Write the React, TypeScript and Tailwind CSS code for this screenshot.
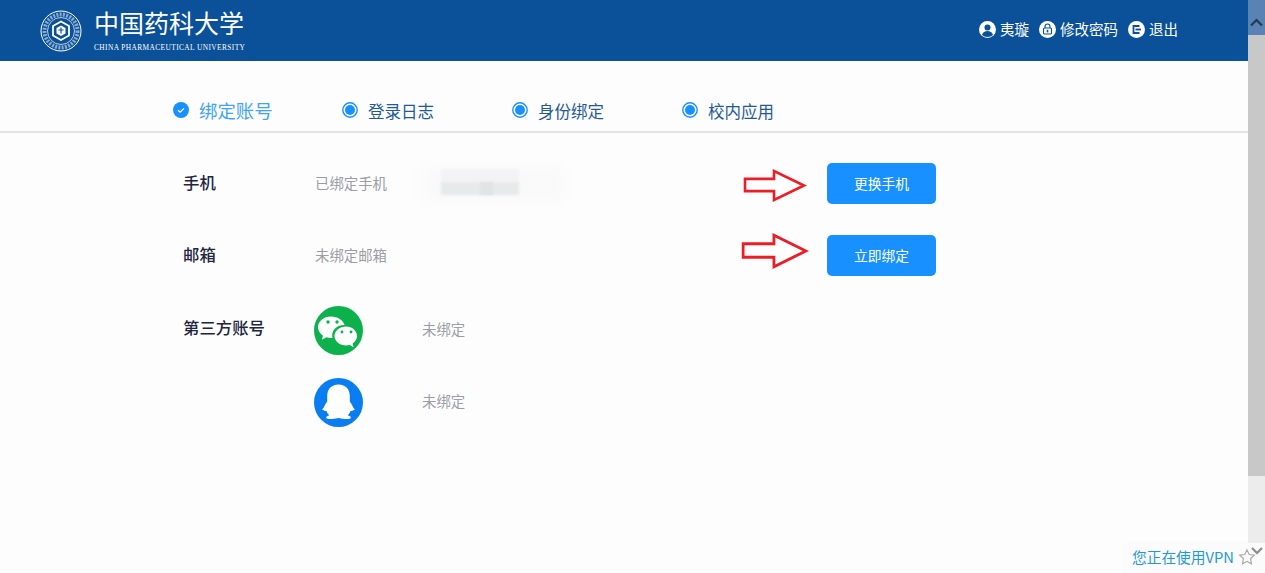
import React from 'react';

const cjk = { fontFamily: '"Noto Sans CJK SC", "Noto Sans", sans-serif' };

const Tab = ({ label, active }: { label: string; active?: boolean }) => (
  <div className={active ? 'flex w-[169px] items-center gap-[10px]' : 'flex w-[170px] items-center gap-[10px]'}>
    {active ? (
      <svg width="16" height="16" viewBox="0 0 16 16" className="mb-[2px] shrink-0">
        <circle cx="8" cy="8" r="8" fill="#1890ff" />
        <path d="M5 8.200 7.200 10.200 11 6.400" fill="none" stroke="#fff" strokeWidth="1.300" />
      </svg>
    ) : (
      <svg width="16" height="16" viewBox="0 0 16 16" className="mb-[2px] shrink-0">
        <circle cx="8" cy="8" r="7.200" fill="#fff" stroke="#1890ff" strokeWidth="1.400" />
        <circle cx="8" cy="8" r="5" fill="#1890ff" />
      </svg>
    )}
    <span className={active ? 'text-[18.400px] text-[#3fa4fb]' : 'text-[16.500px] text-[#1f5a96]'}>{label}</span>
  </div>
);

const BindRow = ({ label, status, action, children }: { label: string; status: string; action: string; children?: React.ReactNode }) => (
  <div className="flex h-[41px] items-center">
    <div className="w-[132px] pb-[3px] text-[16.400px] font-medium text-[#22253f]">{label}</div>
    <div className="relative w-[512px] pb-[2px] text-[14.400px] text-[#9a9ea3]">
      {status}
      {children}
    </div>
    <button className="h-[41px] w-[109px] rounded-[5px] bg-[#1890ff] text-[13.800px] text-white">{action}</button>
  </div>
);

const Seal = () => (
  <svg width="42" height="42" viewBox="0 0 42 42" className="shrink-0">
    <circle cx="21" cy="21" r="20" fill="none" stroke="#fff" strokeWidth="1" />
    <circle cx="21" cy="21" r="16.500" fill="none" stroke="#dfe8f3" strokeWidth="4" strokeDasharray="2 1.300" opacity="0.6" />
    <circle cx="21" cy="21" r="13.500" fill="none" stroke="#fff" strokeWidth="0.700" />
    <path d="M21 11.500 29 16v9.500L21 30l-8-4.500V16z" fill="none" stroke="#fff" strokeWidth="1.800" />
    <path d="M21 15.500 25.500 18v5.500L21 26l-4.500-2.500V18z" fill="#fff" />
    <path d="M21 17.500v6M18.500 20h5" stroke="#0b5199" strokeWidth="1.200" />
  </svg>
);

const WeChat = () => (
  <svg width="49" height="49" viewBox="0 0 49 49">
    <circle cx="24.500" cy="24.500" r="24.500" fill="#0db14b" />
    <path d="M17 10.500C9.800 10.500 4 15.300 4 21.200c0 3.500 2 6.500 5 8.500l-1.200 4.100 4.700-2.500c1.400.4 3 .6 4.500.6h1.500c-.2-.9-.3-1.700-.3-2.600 0-5.700 5.200-10.300 11.600-10.300h.8C28.900 14 23.500 10.500 17 10.500z" fill="#fff" />
    <path d="M32 20.500c-6 0-11.500 4.200-11.500 9.500s5.500 9.500 11.500 9.500c1.300 0 2.500-.2 3.700-.5l3.900 2.300-1-3.700c2.700-1.800 4.400-4.500 4.400-7.600 0-5.300-4.900-9.500-11-9.500z" fill="#fff" />
    <circle cx="14" cy="16" r="1.700" fill="#0db14b" />
    <circle cx="23" cy="16" r="1.700" fill="#0db14b" />
    <circle cx="28" cy="26" r="1.400" fill="#0db14b" />
    <circle cx="37" cy="26" r="1.400" fill="#0db14b" />
  </svg>
);

const QQ = () => (
  <svg width="49" height="49" viewBox="0 0 49 49">
    <circle cx="24.500" cy="24.500" r="24.500" fill="#0a7df2" />
    <path d="M24.500 6.500c-7.300 0-11.300 5-11.300 11.500v5.500c-1.400 1.700-2.500 3.500-3.200 5.500-.4 1.100-1.300 1.600-1.600 2.300-.2.500.4.900 1.400 1 .6.900 1.600 1 2.600.4.600 1.900 1.500 3.300 2.900 4.500-1.700.5-3.300 1.200-3.100 2.600.2 1 2 1.300 4.400 1.300 2.800 0 5.200-.4 7.900-1 2.700.6 5.100 1 7.900 1 2.400 0 4.200-.3 4.400-1.300.2-1.400-1.400-2.100-3.100-2.600 1.400-1.200 2.300-2.600 2.900-4.500 1 .6 2 .5 2.600-.4 1-.1 1.600-.5 1.400-1-.3-.7-1.200-1.200-1.600-2.300-.7-2-1.800-3.800-3.200-5.500V18c0-6.500-4-11.500-11.300-11.500z" fill="#fff" />
  </svg>
);

const ThirdParty = ({ label, icon }: { label?: string; icon: React.ReactNode }) => (
  <div className="flex h-[49px] items-center">
    <div className="w-[131px] pb-[6px] text-[16.400px] font-medium text-[#22253f]">{label}</div>
    <div className="w-[108px] shrink-0">{icon}</div>
    <div className="pb-[4px] text-[14.400px] text-[#9a9ea3]">未绑定</div>
  </div>
);

const RedArrow = ({ className, w, h }: { className: string; w: number; h: number }) => (
  <svg width={w} height={h} viewBox="0 0 64 32" preserveAspectRatio="none" className={className}>
    <path d="M2 9.500h29V2l30 14-30 14v-8.500H2z" fill="#fff" stroke="#ee1c25" strokeWidth="2.600" />
  </svg>
);

const HeaderLink = ({ icon, label }: { icon: React.ReactNode; label: string }) => (
  <div className="flex items-center gap-[4px]">
    {icon}
    <span className="text-[14.500px] text-white">{label}</span>
  </div>
);

export default function App() {
  return (
    <div className="relative flex h-[573px] w-[1265px] overflow-hidden bg-[#fdfdfe]" style={cjk}>
      <div className="flex-1">
        <header className="flex h-[61px] items-center justify-between bg-[#0b5199] pl-[40px] pr-[70px]">
          <div className="flex items-center gap-[12px]">
            <Seal />
            <div className="flex flex-col pb-[4px] text-white">
              <span className="text-[25px] leading-[32px]">中国药科大学</span>
              <span className="mt-[5px] whitespace-nowrap text-[7.400px] leading-[9px] tracking-[0.4px]" style={{ fontFamily: '"Liberation Serif", serif' }}>
                CHINA PHARMACEUTICAL UNIVERSITY
              </span>
            </div>
          </div>
          <div className="flex items-center gap-[10px] pb-[3px]">
            <HeaderLink
              label="夷璇"
              icon={
                <svg width="17" height="17" viewBox="0 0 17 17">
                  <circle cx="8.500" cy="8.500" r="8.500" fill="#fff" />
                  <circle cx="8.500" cy="6.500" r="3" fill="#0b5199" />
                  <path d="M3 14c.8-3 3-4 5.500-4s4.700 1 5.500 4c-1.500 1.300-3.400 2-5.500 2S4.500 15.300 3 14z" fill="#0b5199" />
                </svg>
              }
            />
            <HeaderLink
              label="修改密码"
              icon={
                <svg width="17" height="17" viewBox="0 0 17 17">
                  <circle cx="8.500" cy="8.500" r="8.500" fill="#fff" />
                  <rect x="4.500" y="7" width="8" height="6" rx="1" fill="none" stroke="#0b5199" strokeWidth="1.100" />
                  <path d="M6 7V5.500a2.500 2.500 0 0 1 5 0V7" fill="none" stroke="#0b5199" strokeWidth="1.100" />
                  <rect x="7.700" y="8.800" width="1.600" height="2.600" fill="#0b5199" />
                </svg>
              }
            />
            <HeaderLink
              label="退出"
              icon={
                <svg width="17" height="17" viewBox="0 0 17 17">
                  <circle cx="8.500" cy="8.500" r="8.500" fill="#fff" />
                  <path d="M11.500 5H5.500v7h6" fill="none" stroke="#0b5199" strokeWidth="1.800" />
                  <path d="M7.500 8.500H13" stroke="#0b5199" strokeWidth="1.800" />
                </svg>
              }
            />
          </div>
        </header>

        <nav className="flex h-[72px] items-center border-b-2 border-[#e3e3e5] pl-[173px] pt-[30px]">
          <Tab label="绑定账号" active />
          <Tab label="登录日志" />
          <Tab label="身份绑定" />
          <Tab label="校内应用" />
        </nav>

        <section className="flex flex-col pl-[183px] pt-[30px]">
          <BindRow label="手机" status="已绑定手机" action="更换手机">
            {/* blurred-out phone number */}
            <div className="absolute left-[108px] top-[-5px] h-[34px] w-[140px] bg-[#f9f9fa] blur-[6px]" />
            <div className="absolute left-[126px] top-[-3px] h-[13px] w-[78px] bg-[#f3f3f5] blur-[1px]" />
            <div className="absolute left-[126px] top-[10px] h-[13px] w-[78px] bg-[#e8e9ea] blur-[1px]" />
            <div className="absolute left-[165px] top-[10px] h-[13px] w-[13px] bg-[#e2e3e5] blur-[1px]" />
          </BindRow>
          <div className="mt-[31px]">
            <BindRow label="邮箱" status="未绑定邮箱" action="立即绑定" />
          </div>
          <div className="mt-[30px] flex flex-col gap-[23px]">
            <ThirdParty label="第三方账号" icon={<WeChat />} />
            <ThirdParty icon={<QQ />} />
          </div>
        </section>
      </div>

      <aside className="flex w-[17px] shrink-0 flex-col bg-[#ececec]">
        <div className="flex h-[35px] justify-center bg-[#5a83b5] pt-[18px]">
          <svg width="13" height="9" viewBox="0 0 13 9">
            <path d="M1 7.500 6.500 2l5.500 5.500" fill="none" stroke="#243a52" strokeWidth="2.200" />
          </svg>
        </div>
        <div className="h-[441px] bg-[#c8c8c8]" />
      </aside>

      <RedArrow className="absolute left-[743px] top-[169px]" w={64} h={33} />
      <RedArrow className="absolute left-[741px] top-[233px]" w={68} h={36} />

      <div className="absolute bottom-0 right-0 flex h-[30px] w-[143px] items-center bg-[#fbfbfb] pb-[2px] pl-[10px]">
        <span className="text-[14.700px] text-[#1f9ad6]">您正在使用VPN</span>
        <svg width="18" height="18" viewBox="0 0 24 24" className="ml-[4px]">
          <path d="M12 2.500l2.900 6.300 6.800.8-5 4.700 1.300 6.800-6-3.400-6 3.400 1.300-6.800-5-4.700 6.800-.8z" fill="none" stroke="#a8a8a8" strokeWidth="1.500" />
        </svg>
        <svg width="12" height="10" viewBox="0 0 12 10" className="absolute right-[2px] top-[3px]">
          <path d="M1 2l5 5 5-5" fill="none" stroke="#8c8c8c" strokeWidth="2.200" />
        </svg>
      </div>
    </div>
  );
}
